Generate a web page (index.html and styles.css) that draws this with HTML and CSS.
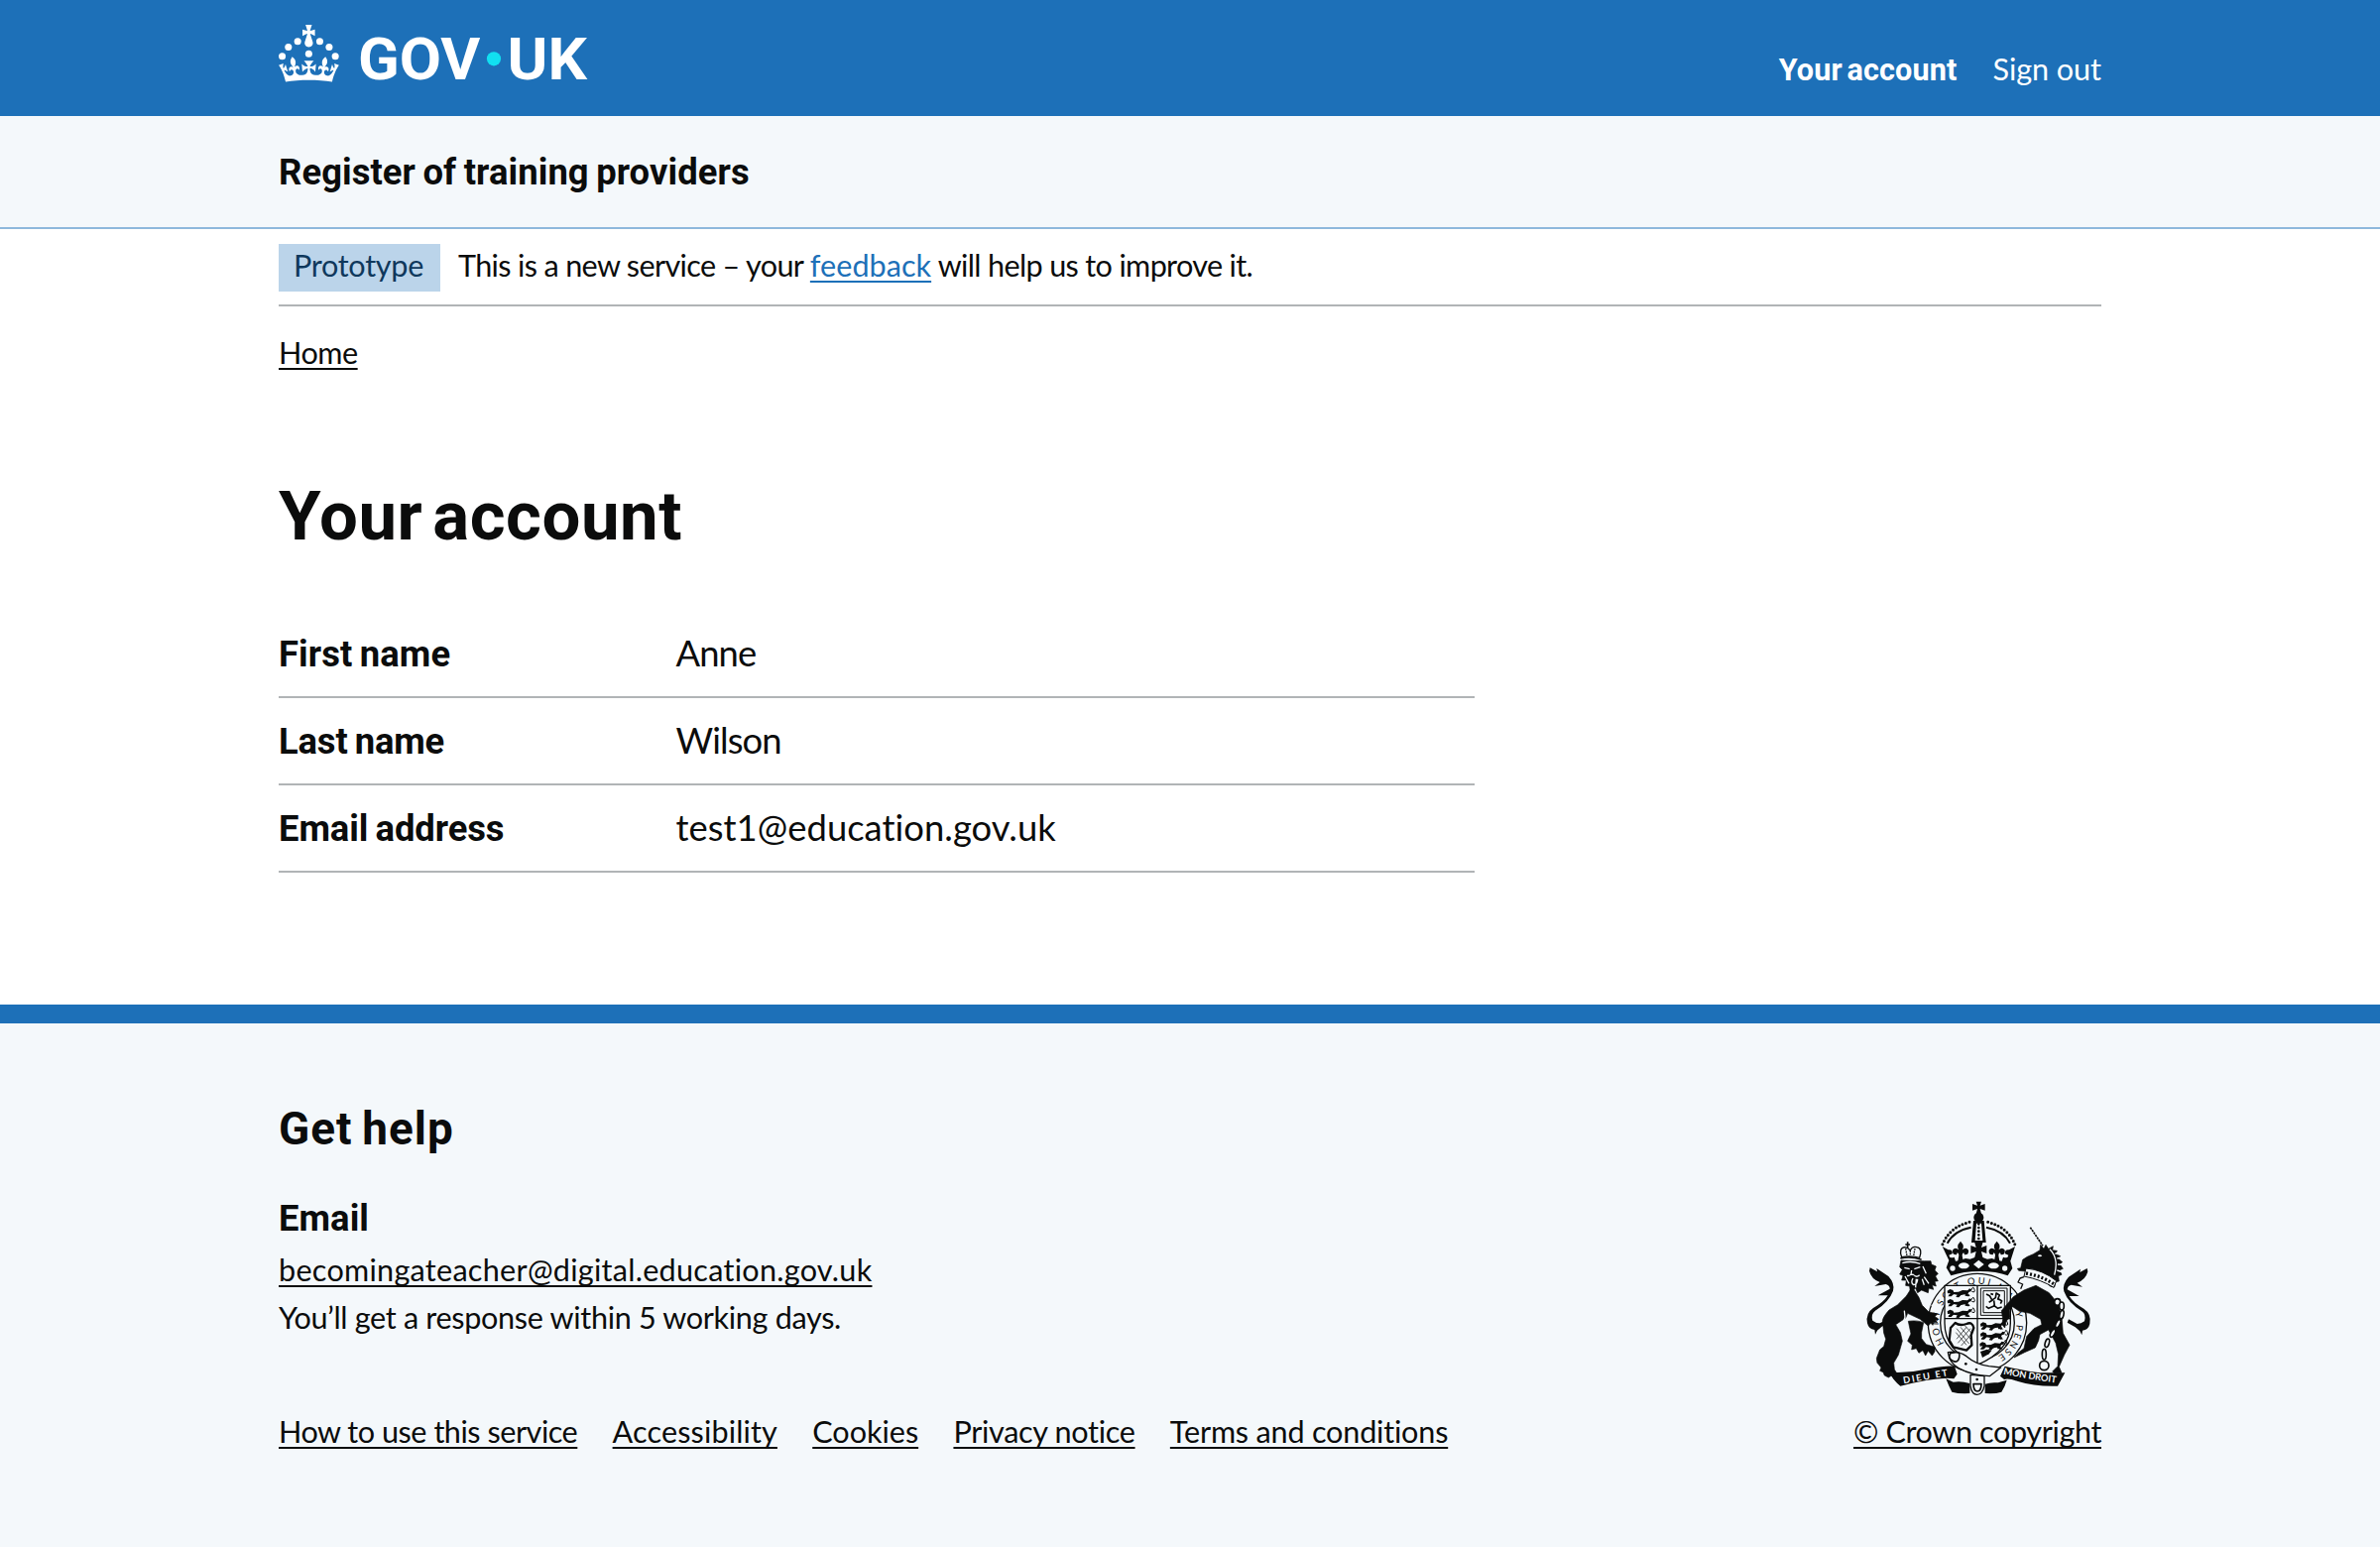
FILE: index.html
```html
<!DOCTYPE html>
<html lang="en">
<head>
<meta charset="utf-8">
<title>Your account - Register of training providers</title>
<link rel="stylesheet" href="styles.css">
</head>
<body>
<header class="header">
  <div class="container header-inner">
    <svg class="logo" viewBox="0 0 324 60" role="img" aria-label="GOV.UK">
      <g fill="#fff">
        <circle cx="20" cy="17.6" r="3.7"/><circle cx="10.2" cy="23.5" r="3.7"/><circle cx="3.7" cy="33.2" r="3.7"/>
        <circle cx="31.7" cy="30.6" r="3.7"/><circle cx="43.3" cy="17.6" r="3.7"/><circle cx="53.2" cy="23.5" r="3.7"/><circle cx="59.7" cy="33.2" r="3.7"/>
        <path d="M33.1,9.8c.2-.1.3-.3.5-.5l4.6,2.4v-6.8l-4.6,1.5c-.1-.2-.3-.3-.5-.5l1.9-5.9h-6.7l1.9,5.9c-.2.1-.3.3-.5.5l-4.6-1.5v6.8l4.6-2.4c.1.2.3.3.5.5l-2.6,8c-.9,2.8,1.2,5.7,4.1,5.7h0c3,0,5.1-2.9,4.1-5.7l-2.6-8ZM37,37.9s-3.4,3.8-4.1,6.1c2.2,0,4.2-.5,6.4-2.8l-.7,8.5c-2-2.8-4.4-4.1-5.7-3.8.1,3.1.5,6.7,5.8,7.2,3.7.3,6.7-1.5,7-3.8.4-2.6-2-4.3-3.7-1.6-1.4-4.5,2.4-6.1,4.9-3.2-1.9-4.5-1.8-7.7,2.4-10.9,3,4,2.6,7.3-1.2,11.1,2.4-1.3,6.2,0,4,4.6-1.2-2.8-3.7-2.2-4.2.2-.3,1.7.7,3.7,3,4.2,1.9.3,4.7-.9,7-5.9-1.3,0-2.4.7-3.9,1.7l2.4-8c.6,2.3,1.4,3.7,2.2,4.5.6-1.6.5-2.8,0-5.3l5,1.8c-2.6,3.6-5.2,8.7-7.3,17.5-7.4-1.1-15.7-1.7-24.5-1.7h0c-8.8,0-17.1.6-24.5,1.7-2.1-8.9-4.7-13.9-7.3-17.5l5-1.8c-.5,2.5-.6,3.7,0,5.3.8-.8,1.6-2.3,2.2-4.5l2.4,8c-1.5-1-2.6-1.7-3.9-1.7,2.3,5,5.2,6.2,7,5.9,2.3-.4,3.3-2.4,3-4.2-.5-2.4-3-3.1-4.2-.2-2.2-4.6,1.6-6,4-4.6-3.7-3.7-4.2-7.1-1.2-11.1,4.2,3.2,4.3,6.4,2.4,10.9,2.5-2.8,6.3-1.3,4.9,3.2-1.8-2.7-4.1-1-3.7,1.6.3,2.3,3.3,4.1,7,3.8,5.4-.5,5.7-4.2,5.8-7.2-1.3-.2-3.7,1-5.7,3.8l-.7-8.5c2.2,2.3,4.2,2.7,6.4,2.8-.7-2.3-4.1-6.1-4.1-6.1h10.6,0Z"/>
        <text class="logo-text" x="83.5" y="57.6" textLength="129" lengthAdjust="spacingAndGlyphs">GOV</text>
        <text class="logo-text" x="241" y="57.6" textLength="84" lengthAdjust="spacingAndGlyphs">UK</text>
      </g>
      <circle cx="226.8" cy="35.9" r="7.4" fill="#11e0f1"/>
    </svg>
    <nav class="account-nav">
      <a class="account-nav-current" href="#">Your account</a>
      <a class="account-nav-link" href="#">Sign out</a>
    </nav>
  </div>
</header>
<div class="service-nav">
  <div class="container service-name">Register of training providers</div>
</div>
<div class="container">
  <div class="phase-banner">
    <strong class="tag">Prototype</strong>
    <span class="phase-text">This is a new service – your <a class="feedback" href="#">feedback</a> will help us to improve it.</span>
  </div>
  <nav class="breadcrumbs"><a class="link home" href="#">Home</a></nav>
</div>
<main class="container main">
  <h1 class="title">Your account</h1>
  <dl class="summary">
    <div class="row"><dt class="key">First name</dt><dd class="value name-value">Anne</dd></div>
    <div class="row"><dt class="key key-last">Last name</dt><dd class="value name-value">Wilson</dd></div>
    <div class="row"><dt class="key key-email">Email address</dt><dd class="value">test1@education.gov.uk</dd></div>
  </dl>
</main>
<footer class="footer">
  <div class="container footer-inner">
    <div>
      <h2 class="help-title">Get help</h2>
      <h3 class="help-heading">Email</h3>
      <p class="help-text"><a class="link email" href="#">becomingateacher@digital.education.gov.uk</a></p>
      <p class="help-text">You’ll get a response within 5 working days.</p>
      <nav class="footer-links">
        <a class="link" href="#">How to use this service</a>
        <a class="link link-accessibility" href="#">Accessibility</a>
        <a class="link link-cookies" href="#">Cookies</a>
        <a class="link link-privacy" href="#">Privacy notice</a>
        <a class="link link-terms" href="#">Terms and conditions</a>
      </nav>
    </div>
    <div class="copyright">
      <svg class="arms" viewBox="70 60 672 588" stroke-linejoin="round" aria-hidden="true">
        <defs>
          <path id="garter" d="M303 491A118 118 0 1 1 459 533"/>
          <path id="motto-left" d="M180 613Q250 600 318 588"/>
          <path id="motto-right" d="M481 584Q560 600 646 611"/>
          <g id="passant">
            <path d="M0 8l8-5 9 3 3 6 14-1 12-5 15 1 6-5 8 2-4 6-6 2-3 7 8 5-9 1-8-6-12 2-6 7-9-1 4-7-12-2-6 7-10 0 4-5 3-5-8 1z"/>
            <path d="M4 22l10-2 6-6m14 8l10-4m10 4l12-2" fill="none" stroke="#0b0c0c" stroke-width="4"/>
            <path d="M66 3q8 4 10-3t6 4-8 6" fill="none" stroke="#0b0c0c" stroke-width="3"/>
          </g>
          <path id="fleur" d="M0-29q14 14 5 26 12-10 19 1 2 15-12 14l-2-6q-5 0-5 8l4 22h-18l4-22q0-8-5-8l-2 6q-14 1-12-14 7-11 19-1-9-12 5-26z"/>
          <path id="tail" d="M78 262l22 12-2-10 36 24q20 22 14 44-12 34-54 60-14 10-8 30 10 8 22 8l26-14 4 10-24 14-14 12-6 12-2-14q-18-2-22-20-6-30 18-46 32-18 44-38l-30 0 36-20q0-10-12-14l-34 6 16-12q-26-10-32-34z"/>
        </defs>
        <!-- garter -->
        <circle cx="403" cy="429" r="149" fill="#f4f8fb" stroke="#0b0c0c" stroke-width="4"/>
        <circle cx="403" cy="429" r="112" fill="none" stroke="#0b0c0c" stroke-width="4"/>
        <text class="garter-text"><textPath href="#garter" textLength="556">HONI SOIT QUI MAL Y PENSE</textPath></text>
        <!-- shield -->
        <path d="M304 316H503V430Q503 515 403 556Q304 515 304 430Z" fill="#f4f8fb" stroke="#0b0c0c" stroke-width="4"/>
        <path d="M403 316V556M304 416H503" stroke="#0b0c0c" stroke-width="4"/>
        <g fill="#0b0c0c">
          <use href="#passant" x="312" y="324"/><use href="#passant" x="312" y="354"/><use href="#passant" x="312" y="386"/>
          <use href="#passant" x="412" y="424"/><use href="#passant" x="412" y="454"/><use href="#passant" x="410" y="484"/>
          <path d="M412 516l20-7 14 4-8 10-20 11z"/>
        </g>
        <g fill="none" stroke="#0b0c0c">
          <rect x="413" y="324" width="80" height="82" stroke-width="3"/>
          <rect x="421" y="332" width="64" height="66" stroke-width="3"/>
          <path d="M430 342l10 5 8 14-10 6m8-6l12-8 2-14 10 6-5 12 10 4m-22 0l2 16-18 8-8-6m22-4l14 10 12-4m-34-40l8 2m14 12l12 8-4 8" stroke-width="5"/>
          <path d="M330 502l-12-20 4-38 14-15q14 10 34 3 18-8 22 12l-8 22 2 30-16 16z" stroke-width="7"/>
          <path d="M340 446l38 46m-40-34l32 38m-18-54l34 40m-22-46l22 24M340 478l30-36m-26 48l38-44m-28 52l30-34" stroke-width="2"/>
        </g>
        <!-- imperial crown -->
        <path d="M300 200Q330 140 407 134Q484 140 514 200L496 282Q407 268 318 282Z" fill="#f4f8fb"/>
        <g fill="#0b0c0c">
          <path d="M399 62h16l-4 12 15-5v20l-15-5 4 15h-16l4-15-15 5v-20l15 5z"/>
          <circle cx="407" cy="110" r="15"/>
          <path d="M391 120h32l6 66h-44z"/>
          <use href="#fleur" x="352" y="211"/><use href="#fleur" x="462" y="211"/>
          <path d="M394 184h26l-5 17 16-6v24l-16-6 8 34h-32l8-34-16 6v-24l16 6z"/>
          <path d="M297 198l18 10q14-2 12 12l-10 4q2 12 16 6l4 12 14-2 16-6 14 2 16-6h20l16 6 14-2 16 6 14 2 4-12q14 6 16-6l-10-4q-2-14 12-12l18-10-14 44 6 22-14 22q-34-13-84-13t-88 13l-14-24 8-22z"/>
        </g>
        <path d="M400 128h15l4 52h-23z" fill="#f4f8fb"/>
        <path d="M407 130v50" stroke="#0b0c0c" stroke-width="8" stroke-linecap="round" stroke-dasharray="0 11"/>
        <g fill="none" stroke="#0b0c0c">
          <path d="M379 124Q316 140 296 196M435 124Q498 140 518 196" stroke-width="9" stroke-linecap="round" stroke-dasharray="0 11"/>
          <path d="M384 140Q332 150 312 188M430 140Q482 150 502 188" stroke-width="6"/>
        </g>
        <g fill="#f4f8fb">
          <path d="M407 239l16 13-16 13-16-13z"/><ellipse cx="362" cy="256" rx="16" ry="9"/><ellipse cx="452" cy="256" rx="16" ry="9"/>
          <circle cx="328" cy="264" r="8"/><circle cx="486" cy="264" r="8"/>
        </g>
        <!-- lion -->
        <use href="#tail" fill="#0b0c0c"/>
        <g fill="#0b0c0c" stroke="#0b0c0c" stroke-width="2">
          <path d="M206 320l-18 28-26 26-26 16q-18 20-20 32l4 38 6 18-6 22-12 10-10 26 2 14 12 14-4 10 10 4 4 10 12 6 10-6 8 12 4-12 10 4-14-22-2-20 14-24 12-42-6-26-14-24 30-20 6-14 38 18 24 20 8-8 6 6 2-10 12 2-6-8 8-4-10-6 8-8-26-6-20-20-10-24z"/>
          <path d="M172 240l-4 20 8 8-8 14 10 4-4 14 14 0-2 16 12 2 2 18 16-12 6 14 12-8 20 8 2-14 14 4-4-14 12 4-4-14 10-2-8-14 8-8-10-10 4-12-14-6-2-10-20 0z"/>
          <path d="M194 424q28-4 46 4l-6 30 0 18 14 18 26 8 0 14-8 12-12-14-8 14-8-16-12 8-8-14-14 4 2-14-14-12 10-22z"/>
        </g>
        <path d="M174 230q-10-28 10-30 10 2 16 10 6-14 20-10 18 4 8 32-24-8-54-2z" fill="#f4f8fb" stroke="#0b0c0c" stroke-width="4"/>
        <path d="M186 204l4 22m10-16v16m14-22l-4 22" stroke="#0b0c0c" stroke-width="4" stroke-dasharray="5 3"/>
        <path d="M192 184v18m-7-10h14M170 234q30-8 64 4" fill="none" stroke="#0b0c0c" stroke-width="5"/>
        <g fill="none" stroke="#f4f8fb" stroke-width="4">
          <path d="M176 248q26-8 54 2M182 262l16 4m14 0l18-6M204 270l-2 12 10 2M190 286q8 2 12-4m10 4q8 6 16-2M208 294q-8 14 2 20 12-2 12-18M184 288l12 22m42-52l10 22m-6 10l14 20m-38-14l-2 26m20-26l6 18"/>
          <path d="M182 392l2 20-6 18M264 374l20 20m-12-22l22 12"/>
        </g>
        <!-- unicorn -->
        <use href="#tail" fill="#0b0c0c" transform="translate(813 2) scale(-1 1)"/>
        <g fill="#0b0c0c" stroke="#0b0c0c" stroke-width="2">
          <path d="M540 238l14-9 18-8 20-12 2-16 10 12 6-12 8 12 14-8-2 12 14 2-4 10 14 6-6 8 12 10-8 6 10 14-10 4 6 14-10 4 2 16-10 2-4 16-12-2-18-18-32-14-6-10 4-12-14 2-10 6-20-2-4-6 10-2z"/>
          <path d="M512 350l32-20 36-14 40 22 26 32 12 40 4 50 20 36-16 30-16 36 8 18-22 2-6-6 16-16 2-36-8-34-22-40-26 14-4 18-10 22-32 14-32 16 12-14 18-14 8-36 22-24 24-12-4-16-32-18-32-6-20-14-10 10 2 22-12 12-4 20-8-10 2-16-4-26z"/>
        </g>
        <path d="M563 140l38 56" stroke="#0b0c0c" stroke-width="5" stroke-dasharray="7 2"/>
        <path d="M585 226q7-7 14 0-7 6-14 0z" fill="#f4f8fb"/>
        <path d="M622 206q28 28 14 78" fill="none" stroke="#f4f8fb" stroke-width="4"/>
        <path d="M638 220l20-8m-14 22l20-4m-18 22l20 2m-22 16l18 6" stroke="#f4f8fb" stroke-width="4"/>
        <path d="M550 264q50 4 92 38l-8 20q-38-24-90-34z" fill="#f4f8fb" stroke="#0b0c0c" stroke-width="3"/>
        <path d="M550 279q46 8 84 32" stroke="#0b0c0c" stroke-width="10" stroke-dasharray="6 6" fill="none"/>
        <path d="M544 290l-12 4-6 12 14 6-6 14" fill="none" stroke="#0b0c0c" stroke-width="4"/>
        <g fill="#f4f8fb" stroke="#0b0c0c" stroke-width="5">
          <ellipse cx="645" cy="366" rx="9" ry="10"/><ellipse cx="658" cy="378" rx="7" ry="12"/><ellipse cx="658" cy="404" rx="6" ry="13" transform="rotate(12 658 404)"/>
          <ellipse cx="647" cy="431" rx="6" ry="13" transform="rotate(26 647 431)"/><ellipse cx="631" cy="460" rx="6" ry="13" transform="rotate(28 631 460)"/>
          <ellipse cx="614" cy="490" rx="6" ry="13" transform="rotate(16 614 490)"/><ellipse cx="605" cy="524" rx="6" ry="16"/><circle cx="605" cy="558" r="14"/>
        </g>
        <!-- motto scroll -->
        <g fill="#0b0c0c">
          <path d="M136 578q60 4 120-10 50-10 78-8l8 24-10 14-20-2q-58 2-142 24-20-16-34-42z"/>
          <path d="M486 560q60 14 106 20l76 0-22 40q-70 2-120-14-28-10-42-6l-12-10z"/>
          <path d="M308 598l22 10q24-4 50 4v30q-32 2-54-4-10-18-18-40zM492 602l-26 8q-24-2-40 4v28q32 2 50-4 10-14 16-36z"/>
        </g>
        <path d="M314 518q4 32 32 48 40 22 94 24l34-26-36-4q-40-6-68-30-26-18-56-12z" fill="#f4f8fb" stroke="#0b0c0c" stroke-width="4"/>
        <path d="M322 520q-10 16 6 24t20-10-10-16z" fill="none" stroke="#0b0c0c" stroke-width="5"/>
        <g fill="#0b0c0c"><circle cx="368" cy="553" r="4"/><circle cx="400" cy="570" r="4"/></g>
        <path d="M382 586v34q4 26 20 26t22-26v-30z" fill="#f4f8fb" stroke="#0b0c0c" stroke-width="4"/>
        <path d="M391 612q0 24 12 24t12-24m-24 2h24" fill="none" stroke="#0b0c0c" stroke-width="5"/>
        <circle cx="402" cy="600" r="4" fill="#0b0c0c"/>
        <g class="motto">
          <text><textPath href="#motto-left" textLength="136">DIEU ET</textPath></text>
          <text><textPath href="#motto-right" textLength="162">MON DROIT</textPath></text>
        </g>
      </svg>
      <a class="link crown-link" href="#">© Crown copyright</a>
    </div>
  </div>
</footer>
</body>
</html>
```
FILE: styles.css
```css
* { box-sizing: border-box; }

body {
  margin: 0;
  min-height: 1560px;
  display: flex;
  flex-direction: column;
  font: 400 30.6px/36px Lato, sans-serif;
  letter-spacing: -0.0155em;
  color: #0b0c0c;
  background: #fff;
}

h1, h2, h3, p, dl, dd, dt { margin: 0; }

.container { width: 1838px; margin: 0 auto; }

/* Header */
.header { height: 117px; background: #1d70b8; }
.header-inner { display: flex; justify-content: space-between; align-items: flex-start; }
.logo { width: 310px; height: 57.4px; margin-top: 25px; overflow: visible; }
.logo-text { font: 700 61.5px Roboto, sans-serif; letter-spacing: 0; }
.account-nav { display: flex; gap: 36px; align-items: baseline; padding-top: 52px; }
.account-nav a { color: #fff; text-decoration: none; }
.account-nav-current { font-family: Roboto, sans-serif; font-weight: 700; letter-spacing: 0.004em; word-spacing: -0.1em; }
.account-nav-link { letter-spacing: -0.002em; }

.service-nav { height: 114px; padding-top: 37px; background: #f4f8fb; border-bottom: 2px solid #8eb8dc; }
.service-name { font: 700 36.4px/40px Roboto, sans-serif; letter-spacing: 0.0022em; word-spacing: -0.045em; }

/* Phase banner */
.phase-banner {
  display: flex;
  gap: 18.5px;
  height: 78px;
  padding: 15px 0 13.5px;
  line-height: 44px;
  border-bottom: 2px solid #b1b4b6;
}
.tag { width: 162.5px; padding-left: 15px; background: #bbd4ea; color: #0f385c; font-weight: 400; letter-spacing: -0.0097em; }
.phase-text { letter-spacing: -0.0215em; }

.link, .feedback { text-decoration: underline; text-decoration-thickness: 2px; text-underline-offset: 4px; text-decoration-skip-ink: none; }
.link { color: #0b0c0c; }
.feedback { color: #1d70b8; letter-spacing: 0.0005em; }

.breadcrumbs { padding-top: 29px; height: 64px; }

/* Account details */
.main { height: 640px; padding-top: 112px; }
.title { font: 700 68.9px/72px Roboto, sans-serif; letter-spacing: 0.0075em; word-spacing: -0.11em; }
.summary { width: 1206px; margin-top: 59px; font-size: 36.4px; line-height: 48px; letter-spacing: 0.0009em; }
.row {
  display: grid;
  grid-template-columns: 400.5px 1fr;
  align-items: baseline;
  height: 88.1px;
  padding-top: 17.8px;
  border-bottom: 2px solid #b1b4b6;
}
.key { font-family: Roboto, sans-serif; font-weight: 700; letter-spacing: 0.0028em; word-spacing: -0.05em; }
.key-last { letter-spacing: -0.004em; }
.key-email { letter-spacing: -0.002em; }
.name-value { letter-spacing: -0.025em; }

/* Footer */
.footer { flex: 1; padding-top: 82px; background: #f4f8fb; border-top: 19px solid #1d70b8; }
.footer-inner { display: flex; justify-content: space-between; align-items: flex-end; }
.help-title { font: 700 45.9px/48px Roboto, sans-serif; letter-spacing: 0.022em; word-spacing: -0.06em; }
.help-heading { margin: 46.7px 0 8.3px; font: 700 36.4px/40px Roboto, sans-serif; letter-spacing: 0.0015em; }
.help-text { line-height: 48px; letter-spacing: -0.0105em; }
.email { letter-spacing: 0.0086em; }
.footer-links { display: flex; gap: 35.3px; margin-top: 73px; }
.link-accessibility { letter-spacing: 0.004em; }
.link-cookies { letter-spacing: -0.001em; }
.link-privacy { letter-spacing: -0.0105em; }
.link-terms { letter-spacing: -0.0065em; }
.copyright { display: flex; flex-direction: column; align-items: flex-end; gap: 19px; }
.arms { width: 224px; height: 196px; margin-right: 12px; overflow: visible; }
.crown-link { letter-spacing: -0.0127em; }
.garter-text { font: 400 28px Lato, sans-serif; letter-spacing: 0; fill: #0b0c0c; }
.motto { font: 700 28px Lato, sans-serif; letter-spacing: 0; fill: #f4f8fb; }
```
